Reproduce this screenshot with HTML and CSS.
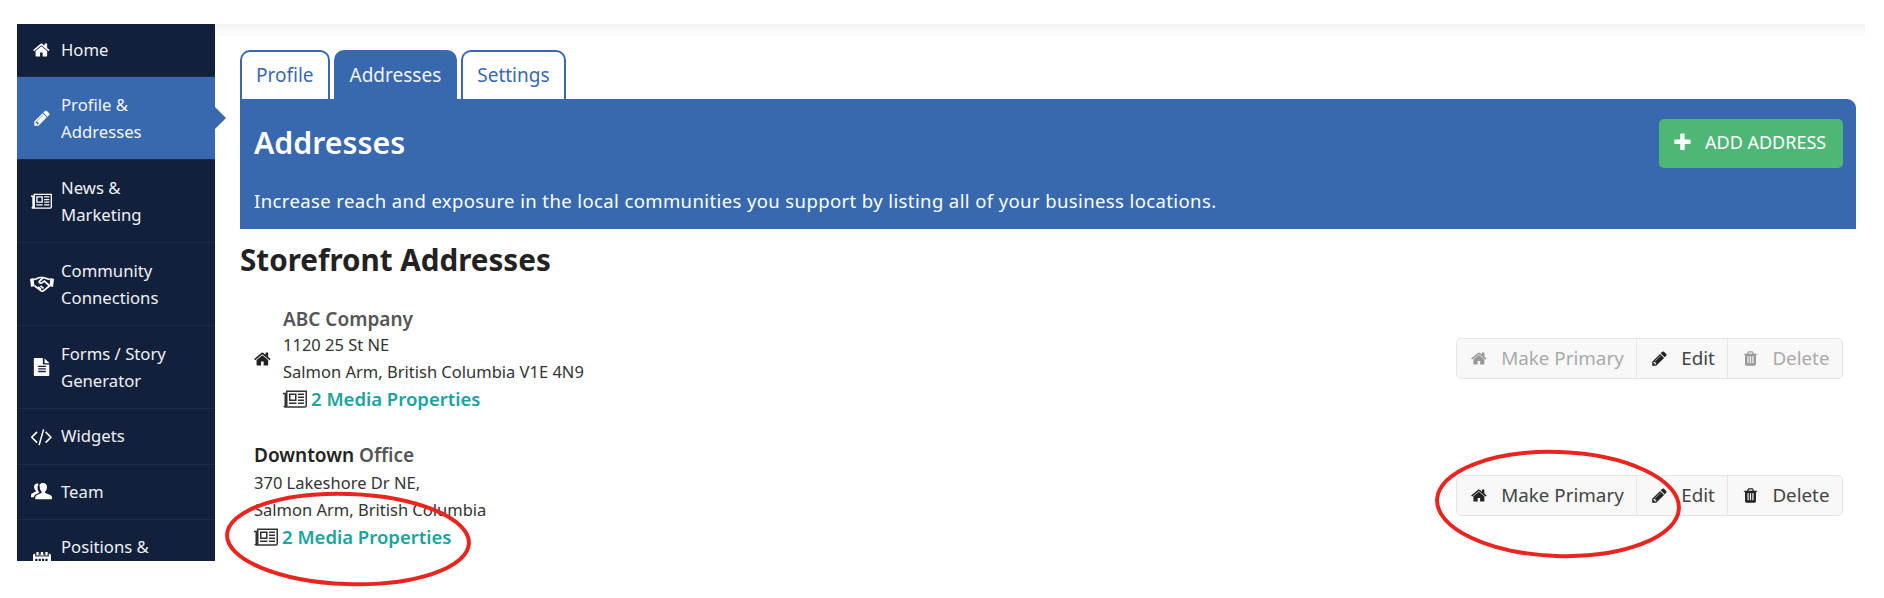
FILE: index.html
```html
<!DOCTYPE html>
<html lang="en">
<head>
<meta charset="utf-8">
<title>Addresses</title>
<link rel="stylesheet" href="styles.css">
</head>
<body>
<svg width="0" height="0" class="defs">
  <symbol id="i-home" viewBox="0 0 1792 1792"><path d="M1408 992v480q0 26-19 45t-45 19h-384v-384h-256v384h-384q-26 0-45-19t-19-45v-480q0-1 .5-3t.5-3l575-474 575 474q1 2 1 6zm223-69l-62 74q-8 9-21 11h-3q-13 0-21-7l-692-577-692 577q-12 8-24 7-13-2-21-11l-62-74q-8-10-7-23.5t11-21.5l719-599q32-26 76-26t76 26l244 204v-195q0-14 9-23t23-9h192q14 0 23 9t9 23v408l219 182q10 8 11 21.5t-7 23.5z"/></symbol>
  <symbol id="i-pencil" viewBox="0 0 1792 1792"><path d="M491 1536l91-91-235-235-91 91v107h128v128h107zm523-928q0-22-22-22-10 0-17 7l-542 542q-7 7-7 17 0 22 22 22 10 0 17-7l542-542q7-7 7-17zm-54-192l416 416-832 832h-416v-416zm683 96q0 53-37 90l-166 166-416-416 166-165q36-38 90-38 53 0 91 38l235 234q37 39 37 91z"/></symbol>
  <symbol id="i-news" viewBox="0 0 2048 1792"><path d="M1024 512h-384v384h384v-384zm128 640v128h-640v-128h640zm0-768v640h-640v-640h640zm640 768v128h-512v-128h512zm0-256v128h-512v-128h512zm0-256v128h-512v-128h512zm0-256v128h-512v-128h512zm128 1024v-1152h-1536v1152q0 30-10 64h1482q26 0 45-19t19-45zm128-1280v1280q0 80-56 136t-136 56h-1664q-80 0-136-56t-56-136v-1088h256v-192h1792zm-1920 1280v-960h-128v960q0 26 19 45t45 19 45-19 19-45z"/></symbol>
  <symbol id="i-file" viewBox="0 0 1792 1792"><path d="M1596 476q14 14 28 36h-472v-472q22 14 36 28zm-476 164h500v1056q0 40-28 68t-68 28h-1344q-40 0-68-28t-28-68v-1600q0-40 28-68t68-28h800v544q0 40 28 68t68 28zm160 736v-64q0-14-9-23t-23-9h-704q-14 0-23 9t-9 23v64q0 14 9 23t23 9h704q14 0 23-9t9-23zm0-256v-64q0-14-9-23t-23-9h-704q-14 0-23 9t-9 23v64q0 14 9 23t23 9h704q14 0 23-9t9-23zm0-256v-64q0-14-9-23t-23-9h-704q-14 0-23 9t-9 23v64q0 14 9 23t23 9h704q14 0 23-9t9-23z"/></symbol>
  <symbol id="i-code" viewBox="0 0 1820 1792"><path d="M553 1399l-50 50q-10 10-23 10t-23-10l-466-466q-10-10-10-23t10-23l466-466q10-10 23-10t23 10l50 50q10 10 10 23t-10 23l-393 393 393 393q10 10 10 23t-10 23zm591-1067l-373 1291q-4 13-15.5 19.5t-23.5 2.5l-62-17q-13-4-19.5-15.5t-2.5-24.5l373-1291q4-13 15.5-19.5t23.5-2.5l62 17q13 4 19.5 15.5t2.5 24.5zm657 651l-466 466q-10 10-23 10t-23-10l-50-50q-10-10-10-23t10-23l393-393-393-393q-10-10-10-23t10-23l50-50q10-10 23-10t23 10l466 466q10 10 10 23t-10 23z"/></symbol>
  <symbol id="i-trash" viewBox="0 0 1792 1792"><path d="M704 1376v-704q0-14-9-23t-23-9h-64q-14 0-23 9t-9 23v704q0 14 9 23t23 9h64q14 0 23-9t9-23zm256 0v-704q0-14-9-23t-23-9h-64q-14 0-23 9t-9 23v704q0 14 9 23t23 9h64q14 0 23-9t9-23zm256 0v-704q0-14-9-23t-23-9h-64q-14 0-23 9t-9 23v704q0 14 9 23t23 9h64q14 0 23-9t9-23zm-544-992h448l-48-117q-7-9-17-11h-317q-10 2-17 11zm928 32v64q0 14-9 23t-23 9h-96v948q0 83-47 143.5t-113 60.5h-832q-66 0-113-58.5t-47-141.5v-952h-96q-14 0-23-9t-9-23v-64q0-14 9-23t23-9h309l70-167q15-37 54-63t79-26h320q40 0 79 26t54 63l70 167h309q14 0 23 9t9 23z"/></symbol>
  <symbol id="i-plus" viewBox="0 0 1792 1792"><path d="M1600 736v192q0 40-28 68t-68 28h-416v416q0 40-28 68t-68 28h-192q-40 0-68-28t-28-68v-416h-416q-40 0-68-28t-28-68v-192q0-40 28-68t68-28h416v-416q0-40 28-68t68-28h192q40 0 68 28t28 68v416h416q40 0 68 28t28 68z"/></symbol>
  <symbol id="i-hands" viewBox="0 0 24 16"><path d="M0 3 3.500 2 4.500 10 1 11z M24 3 20.500 2 19.500 10 23 11z"/><path class="line" d="M3.500 3.500C6 3.500 8 1.500 10 1.500L13 1.500C15 1.500 17 3.500 20.500 3.500M20 9.500 14 14.300C13 15.200 11.500 15.200 10.500 14.300L4.500 9.800M13 1.800 9.300 5.300C8.800 7 11 7.800 12.500 6.300L14.300 5 19.800 10M8 11 11 13.500M10.500 9.800 13.500 12.300"/></symbol>
  <symbol id="i-team" viewBox="0 0 22 18"><path d="M12.500 0c2.800 0 4.300 2 4.300 4.400 0 1.700-.7 3.500-1.900 4.500-.5.500-.4 1.300.2 1.600l5 2.200c1.200.5 1.900 1.400 1.900 2.800v1.500H4.500v-1.500c0-1.400.7-2.300 1.900-2.800l4.400-2.200c.6-.3.700-1.100.2-1.600-1.200-1-1.800-2.800-1.800-4.500C8.200 2 9.700 0 12.500 0z"/><path d="M8 .8C6.800.3 5.300.5 4.300 1.500 3.200 2.600 3 4.500 3.600 6c.3.900.8 1.500 1.300 2 .4.400.3 1-.2 1.300l-3.300 1.500C.5 11.200 0 12 0 13v2h3c.2-1.500 1-2.500 2.300-3.100l3.400-1.700c-1.100-1.200-1.800-3-1.800-5 0-1.700.3-3.100 1.100-4.400z"/></symbol>
  <symbol id="i-cal" viewBox="0 0 16 16"><path d="M3 0h2v3H3zM7 0h2v3H7zM11 0h2v3h-2zM0 3c0-.6.5-1.500 1.500-1.500H2V4h4V1.500h.5V4h3V1.500h.5V4h4V1.500h.500C15.500 1.500 16 2.400 16 3v13H0zM2 6v2h2V6zm3 0v2h2V6zm3 0v2h2V6zm3 0v2h2V6z"/></symbol>
</svg>

<div class="app">
  <nav class="sidebar">
    <a class="nav-item"><svg class="nav-icon"><use href="#i-home"/></svg><span>Home</span></a>
    <a class="nav-item active"><svg class="nav-icon small"><use href="#i-pencil"/></svg><span>Profile &amp;<br>Addresses</span></a>
    <a class="nav-item"><svg class="nav-icon wide"><use href="#i-news"/></svg><span>News &amp;<br>Marketing</span></a>
    <a class="nav-item"><svg class="nav-icon hands"><use href="#i-hands"/></svg><span>Community<br>Connections</span></a>
    <a class="nav-item"><svg class="nav-icon"><use href="#i-file"/></svg><span>Forms / Story<br>Generator</span></a>
    <a class="nav-item single"><svg class="nav-icon wide"><use href="#i-code"/></svg><span>Widgets</span></a>
    <a class="nav-item single"><svg class="nav-icon wide"><use href="#i-team"/></svg><span>Team</span></a>
    <a class="nav-item last"><svg class="nav-icon"><use href="#i-cal"/></svg><span>Positions &amp;<br>&nbsp;</span></a>
  </nav>
  <div class="nav-arrow"></div>

  <main class="main">
    <div class="top-shadow"></div>
    <div class="content">
      <div class="tabs">
        <a class="tab">Profile</a>
        <a class="tab current">Addresses</a>
        <a class="tab">Settings</a>
      </div>
      <section class="panel">
        <div class="panel-head">
          <h1>Addresses</h1>
          <a class="add-btn"><svg class="plus"><use href="#i-plus"/></svg>ADD ADDRESS</a>
        </div>
        <p>Increase reach and exposure in the local communities you support by listing all of your business locations.</p>
      </section>
      <h2>Storefront Addresses</h2>

      <div class="address first">
        <div class="address-left">
          <svg class="addr-home"><use href="#i-home"/></svg>
          <div class="address-text">
            <div class="addr-name">ABC Company</div>
            <div>1120 25 St NE</div>
            <div>Salmon Arm, British Columbia V1E 4N9</div>
            <a class="media"><svg class="media-icon"><use href="#i-news"/></svg>2 Media Properties</a>
          </div>
        </div>
        <div class="btn-group">
          <a class="btn muted"><svg class="btn-icon"><use href="#i-home"/></svg>Make Primary</a>
          <a class="btn"><svg class="btn-icon"><use href="#i-pencil"/></svg>Edit</a>
          <a class="btn muted"><svg class="btn-icon"><use href="#i-trash"/></svg>Delete</a>
        </div>
      </div>

      <div class="address second">
        <div class="address-left">
          <div class="address-text">
            <div class="addr-name"><span class="dark">Downtown</span> Office</div>
            <div>370 Lakeshore Dr NE,</div>
            <div>Salmon Arm, British Columbia</div>
            <a class="media"><svg class="media-icon"><use href="#i-news"/></svg>2 Media Properties</a>
          </div>
        </div>
        <div class="btn-group">
          <a class="btn"><svg class="btn-icon"><use href="#i-home"/></svg>Make Primary</a>
          <a class="btn"><svg class="btn-icon"><use href="#i-pencil"/></svg>Edit</a>
          <a class="btn"><svg class="btn-icon"><use href="#i-trash"/></svg>Delete</a>
        </div>
      </div>
    </div>
  </main>
</div>

<svg class="annotations" width="1884" height="598" viewBox="0 0 1884 598">
  <ellipse cx="348" cy="539" rx="121" ry="45" transform="rotate(2 348 539)"/>
  <ellipse cx="1558" cy="504" rx="121" ry="52" transform="rotate(2 1558 504)"/>
</svg>
</body>
</html>
```

FILE: styles.css
```css
* { box-sizing: border-box; }
html, body { margin: 0; padding: 0; background: #fff; }
body {
  width: 1884px;
  height: 598px;
  overflow: hidden;
  position: relative;
  font-family: "Noto Sans", "Open Sans", sans-serif;
  color: #333;
}
.defs { position: absolute; }
.line { fill: none; stroke: currentColor; stroke-width: 1.700; }

.app { display: flex; padding: 24px 19px 0 17px; position: relative; }

.sidebar {
  width: 198px;
  height: 537px;
  overflow: hidden;
  flex: none;
  background: #13203c;
  color: #eef1f6;
  font-size: 16.700px;
  line-height: 27px;
}
.nav-item {
  display: flex;
  align-items: center;
  height: 83px;
  border-bottom: 1px solid #1c2b4b;
  padding: 0 0 0 44px;
  position: relative;
}
.nav-item:first-child { height: 53px; padding-bottom: 1px; }
.nav-item.single { height: 55.500px; padding-bottom: 1px; }
.nav-item.last { padding-bottom: 2px; }
.nav-item.active { background: #3869ae; color: #f2f5fa; }
.nav-icon {
  position: absolute;
  left: 16px;
  top: 50%;
  width: 18px;
  height: 18px;
  margin-top: -9px;
  fill: #fff;
  color: #fff;
}
.nav-icon.wide { left: 14px; width: 21px; height: 21px; margin-top: -10.500px; }
.nav-icon.hands { left: 13px; width: 24px; height: 16px; margin-top: -8px; }
.nav-arrow {
  position: absolute;
  left: 215px;
  top: 107px;
  border-left: 11px solid #3869ae;
  border-top: 11px solid transparent;
  border-bottom: 11px solid transparent;
}

.main { flex: 1; min-width: 0; }
.top-shadow { height: 14px; background: linear-gradient(#f3f3f3, #fff); }
.content { padding: 12px 9px 0 25px; }

.tabs { display: flex; gap: 4px; height: 49px; }
.tab {
  height: 49px;
  padding: 0 14px 2px;
  display: flex;
  align-items: center;
  border: 2px solid #3869ae;
  border-bottom: 0;
  border-radius: 10px 10px 0 0;
  color: #3869ae;
  font-size: 19px;
  background: #fff;
}
.tab.current { background: #3869ae; color: #f1f4f9; }

.panel {
  height: 130px;
  background: #3869ae;
  color: #fff;
  border-radius: 0 9px 0 0;
  padding: 20px 13px 0 14px;
}
.panel-head { display: flex; justify-content: space-between; align-items: center; height: 49px; }
.panel h1 { margin: -3px 0 0; font-size: 30.300px; font-weight: 600; }
.add-btn {
  width: 184px;
  height: 49px;
  background: #4fb776;
  border-radius: 5px;
  display: flex;
  align-items: center;
  padding: 0 0 3px 13px;
  font-size: 18px;
}
.plus { width: 21px; height: 21px; fill: #fff; margin-right: 12px; }
.panel p { margin: 20px 0 0; font-size: 18.500px; line-height: 26px; letter-spacing: .39px; }

h2 { margin: 8px 0 0; color: #222; font-size: 29.600px; font-weight: 700; line-height: 46px; }

.address { display: flex; justify-content: space-between; align-items: center; padding: 0 13px 0 14px; height: 137px; color: #333; }
.address.first { margin-top: 7px; }
.address.first .addr-name { margin: 2px 0 -2px; }
.address.second .address-text { padding-top: 2px; }
.address-left { display: flex; align-items: center; }
.addr-home { width: 18px; height: 18px; fill: #222; margin-right: 11px; }
.address-text { font-size: 16.500px; line-height: 27px; }
.addr-name { font-size: 19px; font-weight: 600; color: #555; }
.dark { color: #222; }
.media { display: flex; align-items: center; color: #19a49e; font-size: 18.500px; font-weight: 600; line-height: 28px; }
.media-icon { width: 24px; height: 21px; fill: #333; margin-right: 4px; }

.btn-group { display: flex; height: 41px; border: 1px solid #e6e6e6; border-radius: 5px; background: #f8f8f8; }
.btn { display: flex; align-items: center; padding: 0 12.500px 1px 14px; font-size: 18.800px; color: #444; border-left: 1px solid #e6e6e6; }
.btn:first-child { border-left: 0; }
.btn.muted { color: #aaa; }
.btn-icon { width: 17px; height: 17px; margin-right: 13px; fill: #222; }
.btn.muted .btn-icon { fill: #999; }

.annotations { position: absolute; left: 0; top: 0; pointer-events: none; }
.annotations ellipse { fill: none; stroke: #e8251f; stroke-width: 4px; }
```
